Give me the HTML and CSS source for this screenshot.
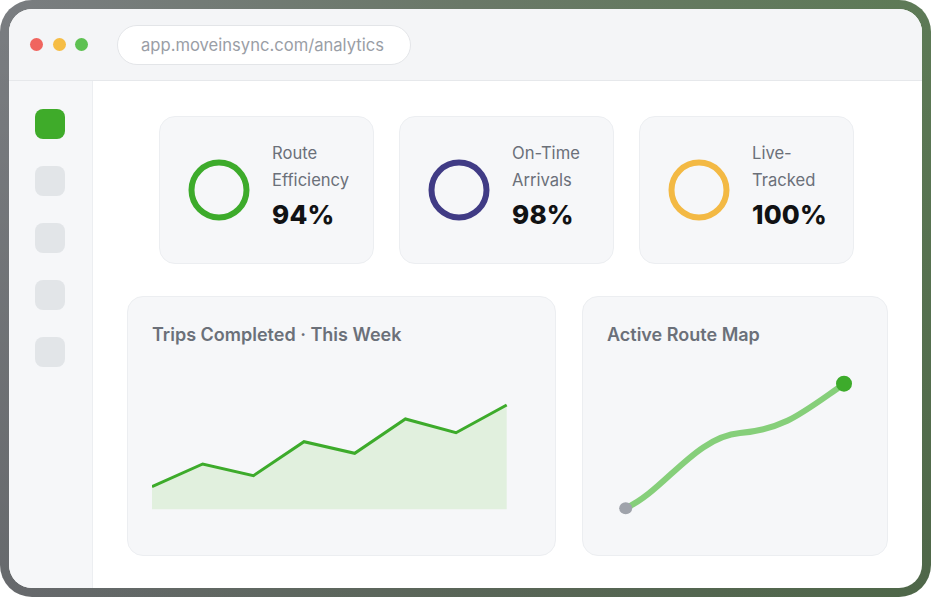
FILE: index.html
```html
<!DOCTYPE html>
<html lang="en">
<head>
<meta charset="utf-8">
<title>Analytics</title>
<link rel="stylesheet" href="styles.css">
</head>
<body>
<div class="frame">
  <div class="window">
    <header class="chrome">
      <div class="lights">
        <span class="light red"></span>
        <span class="light yellow"></span>
        <span class="light green"></span>
      </div>
      <div class="url">app.moveinsync.com/analytics</div>
    </header>
    <div class="app">
      <nav class="sidebar">
        <span class="nav-item active"></span>
        <span class="nav-item"></span>
        <span class="nav-item"></span>
        <span class="nav-item"></span>
        <span class="nav-item"></span>
      </nav>
      <main class="main">
        <section class="stats">
          <div class="stat">
            <svg class="ring" width="62" height="62" viewBox="0 0 62 62"><circle cx="31" cy="31" r="27.5" fill="none" stroke="#3dab2b" stroke-width="6"/></svg>
            <div class="stat-text">
              <div class="stat-label">Route Efficiency</div>
              <div class="stat-value">94%</div>
            </div>
          </div>
          <div class="stat">
            <svg class="ring" width="62" height="62" viewBox="0 0 62 62"><circle cx="31" cy="31" r="27.5" fill="none" stroke="#403b85" stroke-width="6"/></svg>
            <div class="stat-text">
              <div class="stat-label">On-Time Arrivals</div>
              <div class="stat-value">98%</div>
            </div>
          </div>
          <div class="stat">
            <svg class="ring" width="62" height="62" viewBox="0 0 62 62"><circle cx="31" cy="31" r="27.5" fill="none" stroke="#f3b944" stroke-width="6"/></svg>
            <div class="stat-text">
              <div class="stat-label">Live-Tracked</div>
              <div class="stat-value">100%</div>
            </div>
          </div>
        </section>
        <section class="panels">
          <div class="panel trips">
            <h2 class="panel-title">Trips Completed · This Week</h2>
            <svg class="chart" width="356" height="110" viewBox="0 0 356 110">
              <polygon points="0,86.7 50.7,64 101.4,75.7 152,41.7 202.7,53.3 253.4,19 304,32.7 354.7,5 354.7,109.3 0,109.3" fill="#e1f0de"/>
              <polyline points="0,86.7 50.7,64 101.4,75.7 152,41.7 202.7,53.3 253.4,19 304,32.7 354.7,5" fill="none" stroke="#3dab2b" stroke-width="3" stroke-linejoin="miter"/>
            </svg>
          </div>
          <div class="panel map">
            <h2 class="panel-title">Active Route Map</h2>
            <svg class="route" width="254" height="150" viewBox="0 0 254 150">
              <path d="M19,137 C57,120 88,66 133,62 S195,42 237,13" fill="none" stroke="#86cf7a" stroke-width="6" stroke-linecap="round"/>
              <ellipse cx="18.7" cy="137.3" rx="6.5" ry="6" fill="#9fa3ab"/>
              <circle cx="237" cy="12.7" r="8" fill="#3dab2b"/>
            </svg>
          </div>
        </section>
      </main>
    </div>
  </div>
</div>
</body>
</html>
```
FILE: styles.css
```css
* { box-sizing: border-box; }
html, body { margin: 0; padding: 0; background: #ffffff; }
body {
  width: 931px;
  height: 597px;
  font-family: Inter, "Noto Sans", "Liberation Sans", sans-serif;
}
.frame {
  width: 931px;
  height: 597px;
  padding: 9px;
  border-radius: 32px;
  background:
    linear-gradient(to bottom, rgba(0,0,0,0) 0%, rgba(0,0,0,0.16) 100%),
    linear-gradient(to right, #7a7d81 0%, #6a7868 50%, #5d7a56 100%);
}
.window {
  width: 100%;
  height: 100%;
  border-radius: 23px;
  background: #ffffff;
  overflow: hidden;
  display: flex;
  flex-direction: column;
}
.chrome {
  height: 72px;
  flex: none;
  background: #f4f5f7;
  border-bottom: 1px solid #e6e8eb;
  display: flex;
  align-items: center;
  padding-left: 21px;
  gap: 29px;
}
.lights { display: flex; gap: 9.5px; }
.light { width: 13px; height: 13px; border-radius: 50%; display: block; }
.red { background: #f0655f; }
.yellow { background: #f6bd45; }
.green { background: #5ec152; }
.url {
  height: 40px;
  width: 294px;
  border-radius: 20px;
  background: #ffffff;
  border: 1px solid #e3e5e8;
  color: #9a9ea6;
  font-size: 16.6px;
  display: flex;
  align-items: center;
  padding-left: 23px;
}
.app { flex: 1; display: flex; min-height: 0; }
.sidebar {
  width: 84px;
  flex: none;
  background: #f6f7f9;
  border-right: 1px solid #eceef1;
  display: flex;
  flex-direction: column;
  align-items: center;
  padding-top: 28px;
  padding-right: 1px;
  gap: 27px;
}
.nav-item { width: 30px; height: 30px; border-radius: 8px; background: #e2e5e8; display: block; }
.nav-item.active { background: #3fab2a; }
.main {
  flex: 1;
  padding: 35px 34px 32px 34px;
  display: flex;
  flex-direction: column;
  gap: 32px;
}
.stats { display: flex; justify-content: center; gap: 25px; padding-right: 2px; }
.stat {
  width: 215px;
  height: 148px;
  border-radius: 16px;
  background: #f6f7f9;
  border: 1px solid #eceef1;
  display: flex;
  align-items: center;
  padding-left: 28px;
  gap: 22px;
}
.ring { display: block; flex: none; }
.stat-text { width: 90px; margin-top: -9px; }
.stat-label { font-size: 16.6px; line-height: 27px; color: #6b7079; }
.stat-value { font-size: 26px; font-weight: 800; color: #111214; line-height: 32px; margin-top: 5px; letter-spacing: 0.2px; }
.panels { display: flex; gap: 26px; flex: 1; }
.panel {
  border-radius: 16px;
  background: #f6f7f9;
  border: 1px solid #eceef1;
  padding: 24px 24px 0 24px;
}
.trips { width: 429px; }
.map { width: 306px; }
.panel-title {
  margin: 0;
  font-size: 18px;
  font-weight: 600;
  line-height: 28px;
  color: #6b7079;
}
.chart { display: block; margin-top: 51px; }
.route { display: block; margin-top: 22px; }
```
